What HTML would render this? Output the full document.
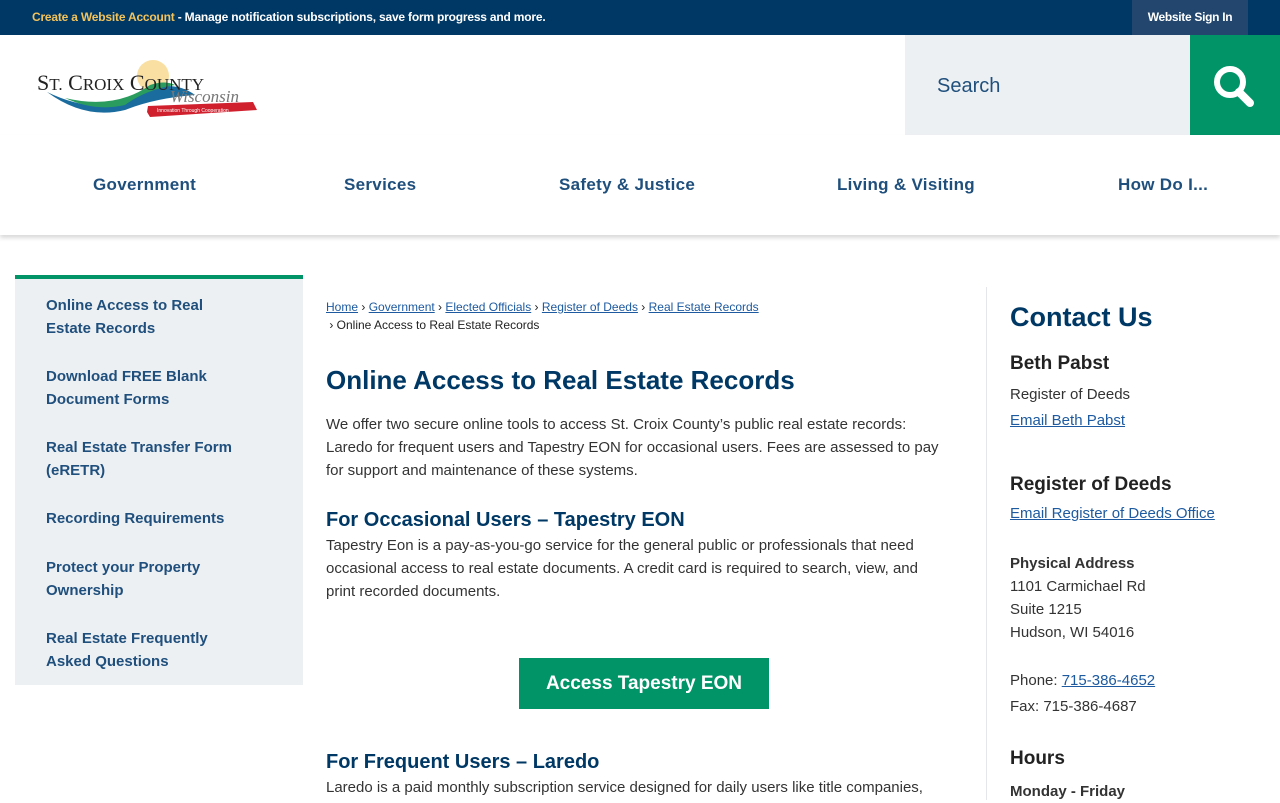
<!DOCTYPE html>
<html><head><meta charset="utf-8"><style>
*{box-sizing:border-box;margin:0;padding:0}
body{width:1280px;height:800px;overflow:hidden;font-family:"Liberation Sans",sans-serif;background:#fff;color:#222;position:relative}
a{color:#1d5aa0;text-decoration:underline}
.top{height:35px;background:#003865;position:relative}
.top .msg{position:absolute;left:32px;top:10px;font-size:12px;color:#fff;font-weight:bold;letter-spacing:-0.2px}
.top .msg b{color:#f3c35b}
.top .sign{position:absolute;left:1132px;top:0;width:116px;height:35px;background:#22466d;color:#fff;font-size:12px;font-weight:bold;text-align:center;line-height:35px;letter-spacing:-0.3px}
.search{position:absolute;left:905px;top:35px;width:285px;height:100px;background:#edf0f3;font-size:20px;color:#1f4f7c;padding:40px 0 0 32px}
.sbtn{position:absolute;left:1190px;top:35px;width:90px;height:100px;background:#009467}
.nav{position:absolute;top:135px;left:0;width:1280px;height:100px;box-shadow:0 3px 4px rgba(0,0,0,.15)}
.nav span{position:absolute;top:40px;font-size:17px;font-weight:bold;color:#1f4f7c;letter-spacing:0.3px}
.side{position:absolute;left:15px;top:275px;width:288px;height:410px;background:#edf0f3;border-top:4px solid #009467}
.side a{position:absolute;left:31px;font-size:15px;font-weight:bold;color:#1f4f7c;text-decoration:none;line-height:23px;width:200px}
.main{position:absolute;left:326px;top:298px;width:625px}
.bc{font-size:12px;line-height:18px;color:#222}
.bc a{color:#1d5aa0}
h1{font-size:26px;color:#003865;margin-top:31px;letter-spacing:0}
p{font-size:15px;line-height:23px;color:#333}
h2{font-size:20px;color:#003865;line-height:24px}
.btn{position:absolute;left:193px;top:360px;width:250px;height:51px;background:#009467;color:#fff;font-size:19px;font-weight:bold;text-align:center;line-height:51px}
.divl{position:absolute;left:986px;top:287px;width:1px;height:513px;background:#e3e6ea}
.ct{position:absolute;left:1010px;top:300px;width:260px}
.ct h3{font-size:19px;color:#222}
.ct p{font-size:15px;line-height:23px}
</style></head><body>
<div class="top"><div class="msg"><b>Create a Website Account</b> - Manage notification subscriptions, save form progress and more.</div><div class="sign">Website Sign In</div></div>
<svg style="position:absolute;left:35px;top:50px" width="225" height="70">
<circle cx="118" cy="26" r="16" fill="#f6d27a" opacity=".7"/>
<path d="M12 42 Q70 70 110 40 Q140 30 160 45 Q120 48 90 60 Q50 70 12 42Z" fill="#1a6b9e"/>
<path d="M30 48 Q80 60 115 35 Q130 30 140 35 Q110 40 90 55 Q60 62 30 48Z" fill="#2a9c5e"/>
<text x="2" y="40" font-family="Liberation Serif,serif" font-size="22" fill="#222">S<tspan font-size="17">T.</tspan> C<tspan font-size="17">ROIX</tspan> C<tspan font-size="17">OUNTY</tspan></text>
<text x="135" y="52" font-family="Liberation Serif,serif" font-style="italic" font-size="17" fill="#777">Wisconsin</text>
<path d="M113 56 L218 52 L222 60 L115 67 L112 62Z" fill="#d0202e"/>
<text x="122" y="62" font-size="5" fill="#fff">Innovation Through Cooperation</text>
</svg>
<div class="search">Search</div>
<div class="sbtn"><svg width="90" height="100"><circle cx="40" cy="47" r="13" fill="none" stroke="#fff" stroke-width="6"/><path d="M49 57 L60 68" stroke="#fff" stroke-width="8" stroke-linecap="round"/></svg></div>
<div class="nav"><span style="left:93px">Government</span><span style="left:344px">Services</span><span style="left:559px">Safety &amp; Justice</span><span style="left:837px">Living &amp; Visiting</span><span style="left:1118px">How Do I...</span></div>
<div class="side">
<a style="top:15px;width:175px">Online Access to Real Estate Records</a>
<a style="top:86px">Download FREE Blank Document Forms</a>
<a style="top:157px">Real Estate Transfer Form (eRETR)</a>
<a style="top:228px">Recording Requirements</a>
<a style="top:277px">Protect your Property Ownership</a>
<a style="top:348px;width:185px">Real Estate Frequently Asked Questions</a>
</div>
<div class="main">
<div class="bc"><a>Home</a> › <a>Government</a> › <a>Elected Officials</a> › <a>Register of Deeds</a> › <a>Real Estate Records</a><br>&nbsp;› Online Access to Real Estate Records</div>
<h1>Online Access to Real Estate Records</h1>
<p style="margin-top:17px;width:615px">We offer two secure online tools to access St. Croix County’s public real estate records: Laredo for frequent users and Tapestry EON for occasional users. Fees are assessed to pay for support and maintenance of these systems.</p>
<h2 style="margin-top:26px">For Occasional Users – Tapestry EON</h2>
<p style="margin-top:2px">Tapestry Eon is a pay-as-you-go service for the general public or professionals that need occasional access to real estate documents. A credit card is required to search, view, and print recorded documents.</p>
<div class="btn">Access Tapestry EON</div>
<h2 style="position:absolute;top:452px">For Frequent Users – Laredo</h2>
<p style="position:absolute;top:478px;white-space:nowrap">Laredo is a paid monthly subscription service designed for daily users like title companies,</p>
</div>
<div class="divl"></div>
<div class="ct">
<div style="font-size:27px;font-weight:bold;color:#003865;margin-top:2px">Contact Us</div>
<h3 style="margin-top:20px">Beth Pabst</h3>
<p style="margin-top:8px">Register of Deeds</p>
<p style="margin-top:3px"><a>Email Beth Pabst</a></p>
<h3 style="margin-top:42px">Register of Deeds</h3>
<p style="margin-top:6px"><a>Email Register of Deeds Office</a></p>
<p style="margin-top:27px"><b>Physical Address</b><br>1101 Carmichael Rd<br>Suite 1215<br>Hudson, WI 54016</p>
<p style="margin-top:25px">Phone: <a>715-386-4652</a></p>
<p style="margin-top:3px">Fax: 715-386-4687</p>
<h3 style="margin-top:30px">Hours</h3>
<p style="margin-top:10px"><b>Monday - Friday</b></p>
</div>
</body></html>
